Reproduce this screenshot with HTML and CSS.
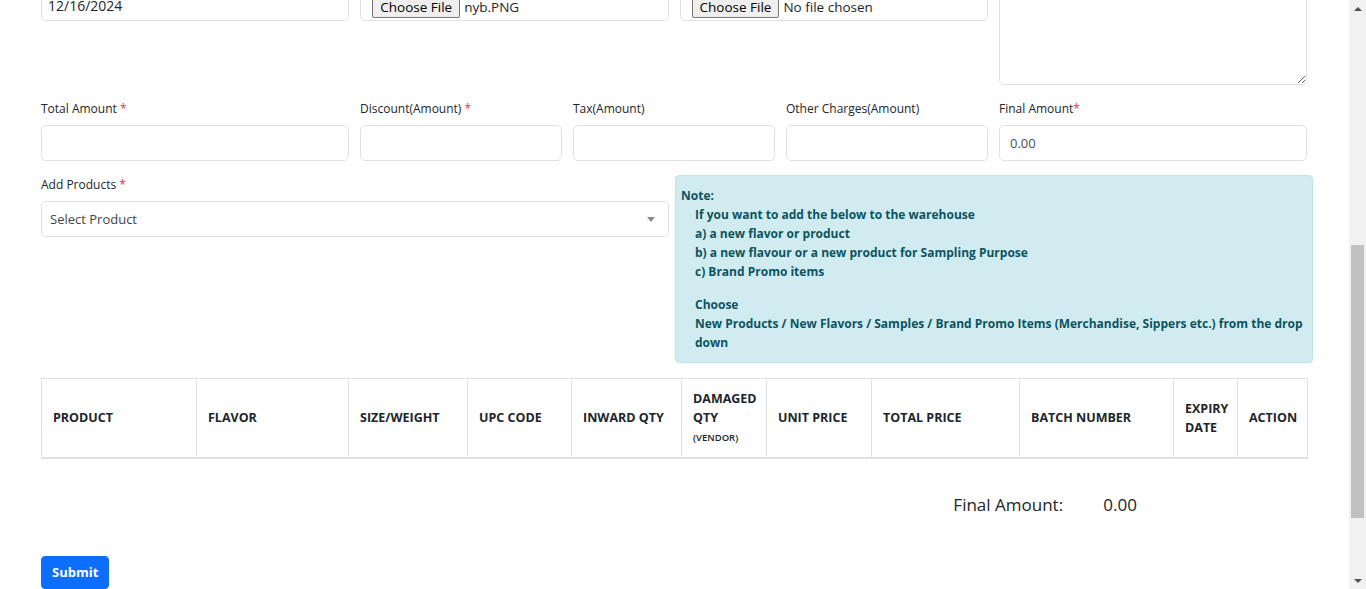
FILE: index.html
```html
<!DOCTYPE html>
<html lang="en">
<head>
<meta charset="utf-8">
<title>Inward Stock</title>
<link rel="stylesheet" href="styles.css">
</head>
<body>
<div class="viewport">
  <main class="page">
    <div class="row row-top">
      <div class="field"><div class="control date-control">12/16/2024</div></div>
      <div class="field"><div class="control file-control"><span class="file-btn">Choose File</span><span class="file-name">nyb.PNG</span></div></div>
      <div class="field"><div class="control file-control"><span class="file-btn">Choose File</span><span class="file-name">No file chosen</span></div></div>
      <div class="field"><textarea class="control textarea"></textarea></div>
    </div>

    <div class="row row-amounts">
      <div class="field"><label class="label">Total Amount <span class="req">*</span></label><input class="control" type="text"></div>
      <div class="field"><label class="label">Discount(Amount) <span class="req">*</span></label><input class="control" type="text"></div>
      <div class="field"><label class="label">Tax(Amount)</label><input class="control" type="text"></div>
      <div class="field"><label class="label">Other Charges(Amount)</label><input class="control" type="text"></div>
      <div class="field"><label class="label">Final Amount<span class="req">*</span></label><input class="control" type="text" value="0.00"></div>
    </div>

    <div class="row-products">
      <div class="field products-field">
        <label class="label">Add Products <span class="req">*</span></label>
        <div class="control select-control"><span>Select Product</span><span class="caret"></span></div>
      </div>
      <div class="note">
        <div>Note:</div>
        <div class="note-body">
          <div>If you want to add the below to the warehouse</div>
          <div>a) a new flavor or product</div>
          <div>b) a new flavour or a new product for Sampling Purpose</div>
          <div>c) Brand Promo items</div>
          <div class="note-gap">Choose</div>
          <div>New Products / New Flavors / Samples / Brand Promo Items (Merchandise, Sippers etc.) from the drop down</div>
        </div>
      </div>
    </div>

    <table class="items">
      <colgroup>
        <col style="width:155px"><col style="width:152px"><col style="width:119px"><col style="width:104px"><col style="width:110px"><col style="width:85px"><col style="width:105px"><col style="width:148px"><col style="width:154px"><col style="width:64px"><col style="width:70px">
      </colgroup>
      <thead>
        <tr>
          <th>PRODUCT</th>
          <th>FLAVOR</th>
          <th>SIZE/WEIGHT</th>
          <th>UPC CODE</th>
          <th>INWARD QTY</th>
          <th>DAMAGED QTY<br><span class="sub">(VENDOR)</span></th>
          <th>UNIT PRICE</th>
          <th>TOTAL PRICE</th>
          <th>BATCH NUMBER</th>
          <th>EXPIRY DATE</th>
          <th>ACTION</th>
        </tr>
      </thead>
    </table>

    <div class="total-row">
      <span class="total-label">Final Amount:</span>
      <span class="total-value">0.00</span>
    </div>

    <div class="actions">
      <button class="btn-submit" type="button">Submit</button>
    </div>
  </main>

  <div class="scrollbar">
    <div class="arrow arrow-up"></div>
    <div class="track">
      <div class="thumb"></div>
    </div>
    <div class="arrow arrow-down"></div>
  </div>
</div>
</body>
</html>
```

FILE: styles.css
```css
* { box-sizing: border-box; }

html, body {
  margin: 0;
  height: 589px;
  overflow: hidden;
  background: #fff;
}

body {
  font-family: "Open Sans", "Noto Sans", Arial, sans-serif;
  color: #212529;
  font-size: 12px;
}

.viewport {
  display: flex;
  height: 589px;
}

.page {
  flex: 1;
  padding: 0 42px 0 41px;
  overflow: hidden;
}

.row {
  display: grid;
  column-gap: 11px;
}

.row-top {
  grid-template-columns: repeat(4, 1fr);
  align-items: start;
  margin-top: -15px;
}

.row-amounts {
  grid-template-columns: 308fr 202fr 202fr 202fr 308fr;
  margin-top: 15px;
}

.field {
  display: flex;
  flex-direction: column;
}

.label {
  font-size: 12px;
  line-height: 18px;
  margin-bottom: 7px;
  color: #212529;
}

.req { color: #dc3545; }

.control {
  height: 36px;
  border: 1px solid #dee2e6;
  border-radius: 5px;
  background: #fff;
  font-family: "Open Sans", Arial, sans-serif;
  font-size: 13px;
  color: #495057;
  padding: 0 10px;
  outline: none;
  width: 100%;
}

.date-control {
  display: flex;
  align-items: flex-end;
  padding-left: 6px;
  padding-bottom: 7px;
  font-size: 14px;
  color: #212529;
  line-height: 14px;
}

.file-control {
  display: flex;
  align-items: flex-end;
  padding-left: 11px;
  padding-bottom: 2px;
  font-size: 13.5px;
  color: #212529;
}

.file-btn {
  display: inline-block;
  background: #efefef;
  border: 1px solid #767676;
  border-radius: 2px;
  padding: 0 7px;
  height: 21px;
  line-height: 19px;
  margin-right: 4px;
  color: #000;
}

.file-name {
  color: #212529;
  line-height: 19px;
  padding-bottom: 1px;
}

.textarea {
  height: 100px;
  resize: vertical;
}

.row-products {
  display: flex;
  column-gap: 6px;
  margin-top: 15px;
  align-items: flex-start;
}

.products-field {
  width: 628px;
  flex: none;
}

.select-control {
  display: flex;
  align-items: center;
  justify-content: space-between;
  padding: 0 13px 0 8px;
  color: #444;
}

.caret {
  width: 0;
  height: 0;
  border-left: 4px solid transparent;
  border-right: 4px solid transparent;
  border-top: 5px solid #888;
}

.note {
  width: 638px;
  flex: none;
  margin-top: -1px;
  background: #d1ecf1;
  border: 1px solid #bee5eb;
  border-radius: 4px;
  color: #0c5460;
  font-weight: 700;
  font-size: 12px;
  line-height: 19px;
  padding: 10px 2px 10px 5px;
}

.note-body {
  padding-left: 14px;
}

.note-gap {
  margin-top: 14px;
}

.items {
  margin-top: 15px;
  width: 1266px;
  border-collapse: collapse;
  table-layout: fixed;
}

.items th {
  border: 1px solid #dee2e6;
  border-bottom: 2px solid #dee2e6;
  height: 79px;
  text-align: left;
  vertical-align: middle;
  font-size: 12.5px;
  font-weight: 700;
  line-height: 19px;
  color: #212529;
  padding: 0 10px 0 11px;
}

.items th .sub {
  font-size: 9.5px;
  font-weight: 600;
}

.total-row {
  display: flex;
  justify-content: flex-end;
  padding-right: 170px;
  margin-top: 34px;
  font-size: 17px;
  line-height: 24px;
  color: #212529;
}

.total-label {
  width: 150px;
}

.actions {
  margin-top: 39px;
}

.btn-submit {
  background: #0d6efd;
  color: #fff;
  border: 1px solid #0d6efd;
  border-radius: 4px;
  font-family: "Open Sans", Arial, sans-serif;
  font-weight: 700;
  font-size: 13px;
  height: 33px;
  padding: 0 10px;
}

.scrollbar {
  width: 17px;
  flex: none;
  background: #f1f1f1;
  display: flex;
  flex-direction: column;
}

.arrow {
  height: 17px;
  flex: none;
  display: flex;
  align-items: center;
  justify-content: center;
}

.arrow::before {
  content: "";
  width: 0;
  height: 0;
  border-left: 4px solid transparent;
  border-right: 4px solid transparent;
}

.arrow-up::before { border-bottom: 4px solid #505050; }
.arrow-down::before { border-top: 4px solid #505050; }

.track {
  flex: 1;
  padding: 228px 2px 0 2px;
}

.thumb {
  height: 273px;
  background: #c1c1c1;
}
```
